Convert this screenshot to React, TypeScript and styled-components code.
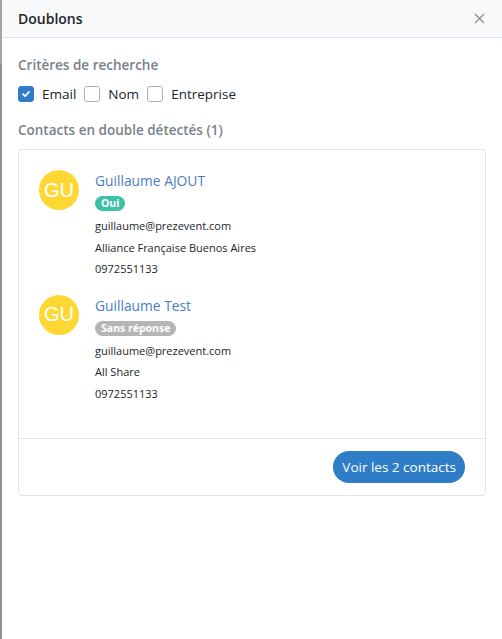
import React from "react";
import styled, { createGlobalStyle } from "styled-components";

const Global = createGlobalStyle`
  html, body { margin: 0; padding: 0; background: #fff; }
  body { font-family: "Open Sans", "Noto Sans", sans-serif; color: #212529; }
  * { box-sizing: border-box; }
`;

const Page = styled.div`
  display: flex;
  width: 502px;
  height: 639px;
  overflow: hidden;
`;

const Backdrop = styled.div`
  width: 2px;
  flex: none;
  background: linear-gradient(#a3a6a9 0 10%, #8e9195 10% 100%);
`;

const Drawer = styled.div`
  flex: 1;
  display: flex;
  flex-direction: column;
  background: #fff;
`;

const Header = styled.div`
  height: 38px;
  display: flex;
  align-items: center;
  justify-content: space-between;
  padding: 0 16px 0 16px;
  background: #f8f9fa;
  border-bottom: 1px solid #dee2e6;
`;

const Title = styled.h1`
  margin: 0;
  font-size: 14px;
  font-weight: 600;
  color: #212529;
`;

const Close = styled.button`
  border: none;
  background: none;
  padding: 0;
  width: 14px;
  height: 14px;
  display: flex;
  align-items: center;
  justify-content: center;
  color: #8a8d91;
`;

const Body = styled.div`
  padding: 17px 16px 0 16px;
  display: flex;
  flex-direction: column;
`;

const SectionTitle = styled.h2<{ $mb: number }>`
  margin: 0 0 ${(p) => p.$mb}px 0;
  font-size: 13.5px;
  font-weight: 600;
  color: #7a8189;
  line-height: 20px;
`;

const CheckRow = styled.div`
  display: flex;
  align-items: center;
  gap: 8px;
  margin-bottom: 16px;
`;

const CheckItem = styled.label`
  display: flex;
  align-items: center;
  gap: 8px;
  font-size: 13.5px;
  color: #212529;
  line-height: 20px;
`;

const Box = styled.span<{ $checked?: boolean }>`
  width: 16px;
  height: 16px;
  border-radius: 3px;
  display: flex;
  align-items: center;
  justify-content: center;
  background: ${(p) => (p.$checked ? "#2f7dc9" : "#fff")};
  border: 1px solid ${(p) => (p.$checked ? "#2f7dc9" : "#aeb3b8")};
`;

const Card = styled.div`
  border: 1px solid #e2e4e6;
  border-radius: 4px;
  display: flex;
  flex-direction: column;
`;

const CardBody = styled.div`
  padding: 20px 20px 34px 20px;
  display: flex;
  flex-direction: column;
  gap: 15px;
`;

const Contact = styled.div`
  display: flex;
  gap: 16px;
`;

const Avatar = styled.div`
  width: 40px;
  height: 40px;
  border-radius: 50%;
  background: #fdd835;
  color: #fff;
  font-size: 20px;
  display: flex;
  align-items: center;
  justify-content: center;
  font-family: "Liberation Sans", Arial, sans-serif;
  flex: none;
`;

const Info = styled.div`
  display: flex;
  flex-direction: column;
`;

const Name = styled.div`
  font-size: 13.8px;
  color: #4a7dc3;
  line-height: 22px;
`;

const Badge = styled.span<{ $color: string }>`
  align-self: flex-start;
  background: ${(p) => p.$color};
  color: #fff;
  font-size: 10.5px;
  font-weight: 700;
  line-height: 15px;
  padding: 0 6px;
  border-radius: 8px;
  margin: 4px 0 4px 0;
`;

const Line = styled.div`
  font-size: 11px;
  line-height: 21.5px;
  color: #212529;
`;

const CardFooter = styled.div`
  border-top: 1px solid #e2e4e6;
  padding: 12px 20px 12px 0;
  display: flex;
  justify-content: flex-end;
`;

const Button = styled.button`
  border: none;
  background: #2f7dc7;
  color: #fff;
  font-family: inherit;
  font-size: 13.5px;
  height: 32px;
  padding: 0 9px;
  border-radius: 16px;
`;

const contacts = [
  { name: "Guillaume AJOUT", badge: "Oui", color: "#3cc1a6", email: "guillaume@prezevent.com", company: "Alliance Française Buenos Aires", phone: "0972551133" },
  { name: "Guillaume Test", badge: "Sans réponse", color: "#b5b5b5", email: "guillaume@prezevent.com", company: "All Share", phone: "0972551133" },
];

const Check = () => (
  <svg width="10" height="10" viewBox="0 0 10 10">
    <path d="M2 5.2 L4.1 7.2 L8 3" fill="none" stroke="#fff" strokeWidth="1.8" strokeLinecap="round" strokeLinejoin="round" />
  </svg>
);

export default function App() {
  return (
    <Page>
      <Global />
      <Backdrop />
      <Drawer>
        <Header>
          <Title>Doublons</Title>
          <Close aria-label="Fermer">
            <svg width="11" height="11" viewBox="0 0 11 11">
              <path d="M1 1 L10 10 M10 1 L1 10" stroke="#8a8d91" strokeWidth="1.4" />
            </svg>
          </Close>
        </Header>
        <Body>
          <SectionTitle $mb={9}>Critères de recherche</SectionTitle>
          <CheckRow>
            <CheckItem><Box $checked><Check /></Box>Email</CheckItem>
            <CheckItem><Box />Nom</CheckItem>
            <CheckItem><Box />Entreprise</CheckItem>
          </CheckRow>
          <SectionTitle $mb={9}>Contacts en double détectés (1)</SectionTitle>
          <Card>
            <CardBody>
              {contacts.map((c) => (
                <Contact key={c.name}>
                  <Avatar>GU</Avatar>
                  <Info>
                    <Name>{c.name}</Name>
                    <Badge $color={c.color}>{c.badge}</Badge>
                    <Line>{c.email}</Line>
                    <Line>{c.company}</Line>
                    <Line>{c.phone}</Line>
                  </Info>
                </Contact>
              ))}
            </CardBody>
            <CardFooter>
              <Button>Voir les 2 contacts</Button>
            </CardFooter>
          </Card>
        </Body>
      </Drawer>
    </Page>
  );
}
